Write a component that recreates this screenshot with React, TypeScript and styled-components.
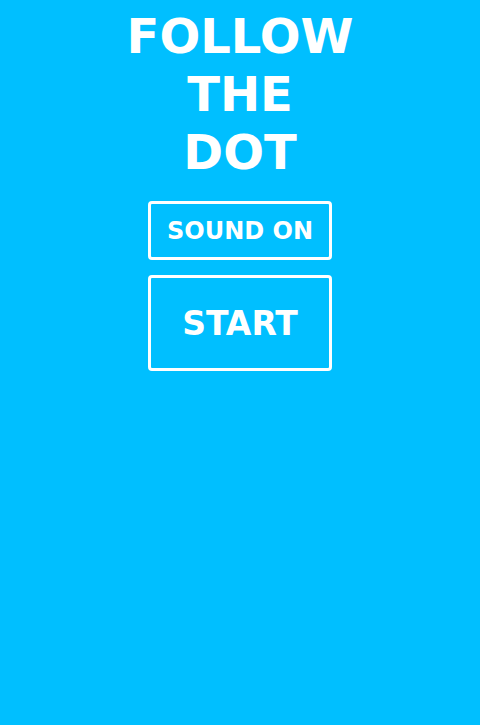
import React, { useState } from "react";
import styled, { createGlobalStyle } from "styled-components";

const GlobalStyle = createGlobalStyle`
  html, body {
    margin: 0;
    padding: 0;
    background: #00bfff;
  }
  body {
    font-family: "DejaVu Sans", Verdana, sans-serif;
  }
`;

const Screen = styled.div`
  min-height: 725px;
  background: #00bfff;
  display: flex;
  flex-direction: column;
  align-items: center;
  padding-top: 7px;
  box-sizing: border-box;
`;

const Title = styled.h1`
  margin: 0;
  color: #ffffff;
  font-family: "DejaVu Sans", Verdana, sans-serif;
  font-weight: bold;
  font-size: 48px;
  line-height: 58px;
  text-align: center;
`;

const Menu = styled.div`
  display: flex;
  flex-direction: column;
  gap: 15px;
  margin-top: 20px;
`;

const MenuButton = styled.button<{ $big?: boolean }>`
  width: 184px;
  height: ${(p) => (p.$big ? 96 : 59)}px;
  box-sizing: border-box;
  border: 3px solid #ffffff;
  border-radius: 4px;
  background: transparent;
  color: #ffffff;
  font-family: "DejaVu Sans", Verdana, sans-serif;
  font-weight: bold;
  font-size: ${(p) => (p.$big ? 33 : 24)}px;
  padding: 0;
  cursor: pointer;
  display: flex;
  align-items: center;
  justify-content: center;
`;

export default function App() {
  const [sound, setSound] = useState(true);
  return (
    <>
      <GlobalStyle />
      <Screen>
        <Title>
          FOLLOW
          <br />
          THE
          <br />
          DOT
        </Title>
        <Menu>
          <MenuButton onClick={() => setSound((s) => !s)}>
            {sound ? "SOUND ON" : "SOUND OFF"}
          </MenuButton>
          <MenuButton $big>START</MenuButton>
        </Menu>
      </Screen>
    </>
  );
}
